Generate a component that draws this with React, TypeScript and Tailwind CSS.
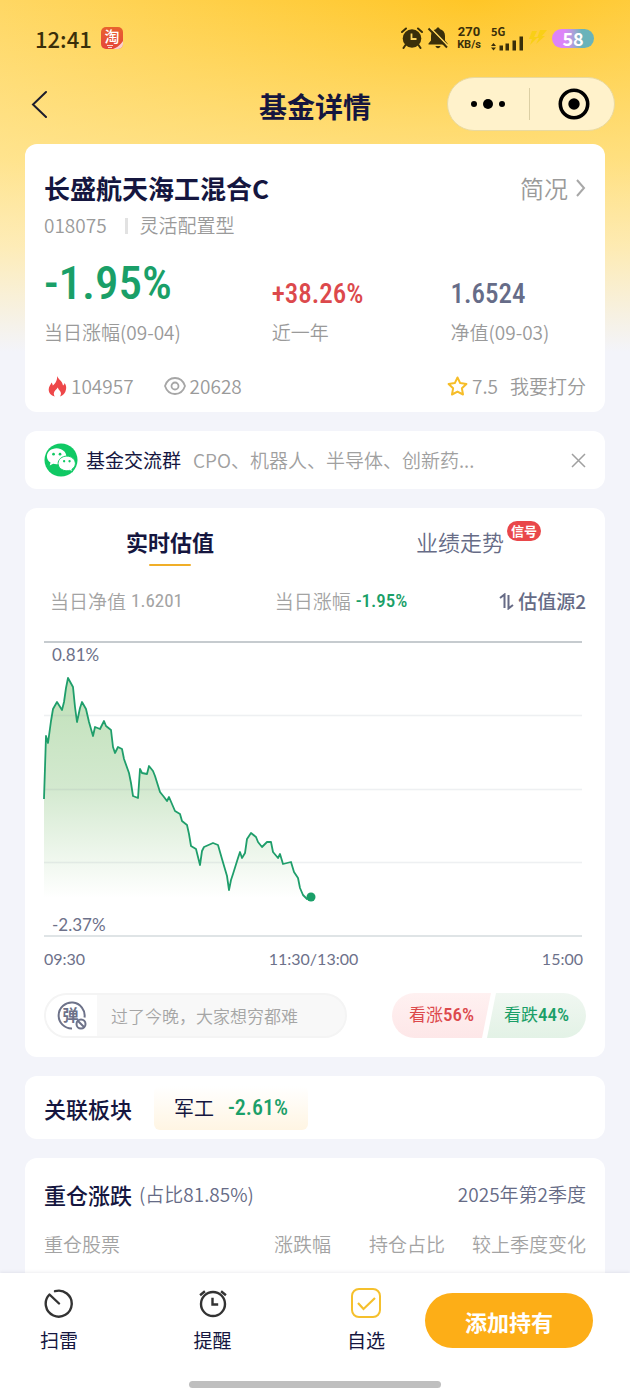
import type { ReactNode } from "react";

const points: [number, number][] = [
  [0, 158], [2, 95], [4, 102], [7, 80], [9, 68], [13, 61], [18, 69], [20, 61],
  [22, 47], [24, 37], [29, 46], [31, 66], [33, 81], [36, 67], [38, 61], [42, 68],
  [45, 81], [49, 95], [51, 86], [56, 88], [60, 80], [62, 85], [67, 89], [69, 106],
  [71, 112], [74, 106], [78, 108], [80, 118], [85, 132], [87, 142], [89, 155],
  [94, 157], [96, 128], [98, 132], [103, 133], [105, 125], [109, 130], [111, 135],
  [116, 151], [120, 156], [123, 160], [125, 156], [131, 170], [136, 173],
  [138, 180], [143, 184], [145, 193], [147, 205], [152, 208], [154, 216],
  [156, 224], [158, 210], [160, 206], [169, 202], [174, 204], [178, 218],
  [183, 235], [185, 249], [187, 239], [189, 233], [194, 217], [196, 211],
  [198, 217], [201, 212], [203, 198], [207, 192], [212, 196], [214, 201],
  [218, 206], [223, 201], [227, 201], [229, 211], [234, 217], [236, 213],
  [239, 223], [247, 221], [250, 231], [254, 237], [256, 247], [259, 254],
  [263, 258], [267, 256],
];

const line = points.map(([x, y]) => `${x},${y}`).join(" ");

const Num = ({ className = "", children }: { className?: string; children: ReactNode }) => (
  <span className={`font-['Roboto_Condensed',Roboto,sans-serif] ${className}`}>
    {children}
  </span>
);

const Card = ({ className = "", children }: { className?: string; children: ReactNode }) => (
  <section className={`rounded-xl bg-white ${className}`}>{children}</section>
);

const StatusBar = () => (
  <div className="flex h-[76px] items-center justify-between pr-9 pl-[35px] text-[#3a2f0a]">
    <div className="flex items-center gap-[9px]">
      <span className="text-[22px] leading-8 font-medium">12:41</span>
      <svg className="overflow-visible" width="22" height="22" viewBox="0 0 22 22">
        <defs>
          <linearGradient id="tao" x1="0" y1="0" x2="0" y2="1">
            <stop offset="0" stopColor="#e8622e" />
            <stop offset="1" stopColor="#e5453a" />
          </linearGradient>
        </defs>
        <rect width="22" height="22" rx="5" fill="url(#tao)" />
        <path d="M22 14v3a5 5 0 0 1-5 5h-5c5-2 7-4 10-8z" fill="#fff" opacity=".75" />
        <path d="M6 18.500h6M7 20.500h4" stroke="#f9d9cf" strokeWidth="1" />
        <text x="11" y="15" textAnchor="middle" fontSize="15" fontWeight="500" fill="#fff">淘</text>
      </svg>
    </div>
    <div className="flex items-center">
      <svg width="22" height="22" viewBox="0 0 22 22" fill="currentColor">
        <circle cx="11" cy="11.500" r="9.300" />
        <path d="M1 5 5 1.500M21 5 17 1.500M4.500 18 2.500 21M17.500 18l2 3" stroke="currentColor" strokeWidth="2" strokeLinecap="round" />
        <path d="M10.500 6.500v5.500h5" fill="none" stroke="#ffd65c" strokeWidth="1.800" />
      </svg>
      <svg className="ml-1" width="22" height="22" viewBox="0 0 22 22" fill="currentColor">
        <path d="M11 .5c1 0 1.700.7 1.700 1.600 3.500.8 5.300 3.400 5.300 6.900v4.500l2.500 3v1h-19v-1l2.500-3V9c0-3.500 1.800-6.100 5.300-6.900C9.300 1.200 10 .5 11 .5zM8.500 19h5c-.3 1.400-1.200 2.200-2.500 2.200S8.800 20.400 8.500 19z" />
        <path d="M3 .5 21.500 19.500" stroke="#ffd65c" strokeWidth="1.600" />
        <path d="M1.500 1.500 20 20.500" stroke="currentColor" strokeWidth="2" />
      </svg>
      <div className="ml-[6px] flex w-7 flex-col items-center font-['Roboto',sans-serif] leading-[13px] font-bold">
        <span className="text-[13px]">270</span>
        <span className="text-[11px]">KB/s</span>
      </div>
      <div className="ml-2 flex flex-col">
        <span className="text-[11px] leading-[10px] font-bold">5G</span>
        <svg width="33" height="15" viewBox="0 0 33 15" fill="currentColor">
          <path d="M0 10 2.500 7 5 10zM0 11.500h5L2.500 14.500zM8.500 9.500H12v5H8.500zM14.500 7.500H18v7h-3.500zM21.500 4.500H25v10h-3.500zM28.500.5H32v14h-3.500z" />
        </svg>
      </div>
      <svg className="ml-1 text-[#f9cf16]" width="20" height="18" viewBox="0 0 20 18" fill="currentColor">
        <path d="M4 2h5L6 8h4L2 16l2-6H1zM12 1h7l-5 6h3L8 15l3-6H9z" />
      </svg>
      <div className="ml-1 flex h-[19px] w-[42px] items-center justify-center rounded-full bg-linear-to-r from-[#dd84f8] from-30% to-[#69b3ba] to-70% text-[18px] leading-none font-bold text-white">
        58
      </div>
    </div>
  </div>
);

const NavBar = () => (
  <header className="grid h-14 grid-cols-[1fr_auto_1fr] items-center px-[15px]">
    <button aria-label="返回" className="ml-[14px] justify-self-start">
      <svg width="22" height="28" viewBox="0 0 22 28" fill="none" stroke="#1c1c2c" strokeWidth="2" strokeLinecap="round">
        <path d="M17 2 4 14.500 17 27" />
      </svg>
    </button>
    <h1 className="pt-1 text-[28px] leading-10 font-bold">基金详情</h1>
    <div className="flex h-[54px] w-[168px] items-center justify-self-end rounded-full border border-[#e9d9a0] bg-[#fff2cb]">
      <button aria-label="更多" className="flex h-full flex-1 items-center justify-center gap-[6px]">
        <span className="size-[6px] rounded-full bg-black" />
        <span className="size-[10px] rounded-full bg-black" />
        <span className="size-[6px] rounded-full bg-black" />
      </button>
      <span className="h-8 w-px bg-[#dccfa4]" />
      <button aria-label="关闭" className="flex h-full flex-1 items-center justify-center pl-1">
        <svg width="32" height="32" viewBox="0 0 32 32">
          <circle cx="16" cy="16" r="13.700" fill="none" stroke="#000" strokeWidth="3.600" />
          <circle cx="16" cy="16" r="5.700" />
        </svg>
      </button>
    </div>
  </header>
);

const Summary = () => (
  <Card className="px-[19px] pt-[25px] pb-[10px] text-[19px] font-[350] text-[#9a9a9a]">
    <div className="flex items-center justify-between">
      <h2 className="text-[26px] leading-[38px] font-bold text-[#15163f]">长盛航天海工混合C</h2>
      <a href="#profile" className="flex items-center gap-2 text-[24px] leading-[38px]">
        简况
        <svg width="10" height="18" viewBox="0 0 10 18" fill="none" stroke="#a8a8a8" strokeWidth="2">
          <path d="m1 1 7 8-7 8" />
        </svg>
      </a>
    </div>
    <div className="flex h-[37px] items-center">
      018075
      <span className="mr-3 ml-[18px] h-4 w-[3px] bg-[#e2e2e2]" />
      灵活配置型
    </div>
    <div className="grid grid-cols-[42fr_33fr_25fr]">
      <div>
        <div className="flex h-[72px] items-end pb-[9px]">
          <Num className="text-[47px] leading-[48px] font-medium text-[#1a9f68]">-1.95%</Num>
        </div>
        <div className="leading-8">当日涨幅(09-04)</div>
      </div>
      <div>
        <div className="flex h-[72px] items-end pb-[7px]">
          <Num className="text-[27px] leading-[30px] font-medium text-[#dc494c]">+38.26%</Num>
        </div>
        <div className="leading-8">近一年</div>
      </div>
      <div>
        <div className="flex h-[72px] items-end pb-[7px]">
          <Num className="text-[27px] leading-[30px] font-medium text-[#666c88]">1.6524</Num>
        </div>
        <div className="leading-8">净值(09-03)</div>
      </div>
    </div>
    <div className="flex items-center pt-[22px] leading-8">
      <svg className="mr-1 ml-1" width="19" height="21" viewBox="0 0 19 21">
        <path d="M9 0c1 3 5.500 5 6 9.500 1-.5 1.300-1.500 1.500-2.500C18 9 18.500 11 18 13.500 17.500 17 15 19.700 12 20.500c1.300-1.800 1.300-3.800 0-5.500-.8-1-1.800-2-2.200-3.500-1.300 2-3.800 3.500-4 6 0 1.200.4 2.200 1 3C3 19.700.7 17 .7 13.500c0-3 2-4.500 2.800-7 .8 1 1.200 2 1.300 3C7.500 7.500 9.500 4 9 0z" fill="#ee4749" />
      </svg>
      104957
      <svg className="mr-1 ml-[30px]" width="22" height="18" viewBox="0 0 22 18" fill="none" stroke="#a6a6a6" strokeWidth="1.800">
        <path d="M1 9c1.500-4.500 5-8 10-8s8.500 3.500 10 8c-1.500 4.500-5 8-10 8S2.500 13.500 1 9z" />
        <circle cx="11" cy="9" r="3.500" />
      </svg>
      20628
      <svg className="mr-1 ml-auto" width="21" height="20" viewBox="0 0 21 20" fill="none" stroke="#f6bd28" strokeWidth="2" strokeLinejoin="round">
        <path d="m10.500 1.500 2.700 5.600 6.200.9-4.500 4.300 1.100 6.200-5.500-2.900L5 18.500l1.100-6.200L1.600 8l6.200-.9z" />
      </svg>
      7.5
      <button className="ml-3">我要打分</button>
    </div>
  </Card>
);

const GroupBanner = () => (
  <Card className="flex h-[58px] items-center px-[19px] text-[19px] leading-8">
    <svg className="mr-2" width="34" height="34" viewBox="0 0 35 35">
      <circle cx="17.500" cy="17.500" r="17" fill="#10c964" />
      <path d="M13 5.500c-5.500 0-10 3.700-10 8.300 0 2.600 1.500 4.900 3.700 6.400l-.8 3 3.500-1.800c1.100.3 2.300.5 3.600.5 5.500 0 10-3.600 10-8.100s-4.500-8.300-10-8.300z" fill="#fff" />
      <path d="M23.500 13.500c-5 0-9 3.400-9 7.600s4 7.500 9 7.500c1 0 2-.2 2.900-.4l3 1.500-.7-2.600c2.200-1.400 3.600-3.600 3.600-6 0-4.200-4-7.600-8.800-7.600z" fill="#fff" stroke="#10c964" />
      <g fill="#10c964">
        <circle cx="9.800" cy="11.500" r="1.400" />
        <circle cx="16.500" cy="11.500" r="1.400" />
        <circle cx="20.700" cy="18.800" r="1.200" />
        <circle cx="26.300" cy="18.800" r="1.200" />
      </g>
    </svg>
    <span>基金交流群</span>
    <span className="ml-3 flex-1 truncate font-[350] text-[#a0a0a0]">CPO、机器人、半导体、创新药...</span>
    <button aria-label="关闭提示">
      <svg width="15" height="15" viewBox="0 0 15 15" stroke="#a0a0a0" strokeWidth="1.500">
        <path d="m1 1 13 13M14 1 1 14" />
      </svg>
    </button>
  </Card>
);

const Chart = () => (
  <div className="relative mt-[25px] mr-1 font-['Lato',sans-serif] text-[17px] leading-5 text-[#6d718a]">
    <svg className="block w-full overflow-visible" height="296" viewBox="0 0 538 296" preserveAspectRatio="none">
      <defs>
        <linearGradient id="area" gradientUnits="userSpaceOnUse" x1="0" y1="37" x2="0" y2="257">
          <stop offset="0" stopColor="#bfe0b8" />
          <stop offset=".5" stopColor="#d3e9cf" />
          <stop offset="1" stopColor="#fff" />
        </linearGradient>
      </defs>
      <polygon points={`${line} 267,257 0,257`} fill="url(#area)" />
      <path d="M0 74.500h538M0 148.500h538M0 221.500h538" stroke="#8a94a0" strokeOpacity=".14" strokeWidth="1.500" />
      <path d="M0 1h538" stroke="#c6cbcf" strokeWidth="2" />
      <path d="M0 295h538" stroke="#dfe4e6" strokeWidth="2" />
      <polyline points={line} fill="none" stroke="#1f9e6b" strokeWidth="1.800" strokeLinejoin="round" />
      <circle cx="267" cy="256" r="4.500" fill="#1a9f68" />
    </svg>
    <span className="absolute top-1 left-2">0.81%</span>
    <span className="absolute bottom-[2px] left-2">-2.37%</span>
  </div>
);

const Estimate = () => (
  <Card className="pt-[15px] pb-[19px]">
    <div role="tablist" className="grid grid-cols-2 text-[22px] leading-9">
      <button role="tab" aria-selected="true" className="flex flex-col items-center gap-[5px] font-bold">
        实时估值
        <span className="h-[2px] w-[42px] rounded-full bg-[#f0ae28]" />
      </button>
      <button role="tab" aria-selected="false" className="justify-self-center self-start font-[350] text-[#666b86]">
        <span className="relative">
          业绩走势
          <span className="absolute -top-1 left-full ml-[3px] rounded-full bg-[#e9474a] px-1 text-[13px] leading-5 font-bold whitespace-nowrap text-white">
            信号
          </span>
        </span>
      </button>
    </div>
    <div className="px-[19px]">
      <div className="mt-5 flex h-[30px] items-center justify-between pl-[6px] text-[19px] font-[350] text-[#a3a3a3]">
        <span className="flex items-center gap-[5px]">
          当日净值 <Num className="font-normal">1.6201</Num>
        </span>
        <span className="flex items-center gap-[5px]">
          当日涨幅 <Num className="font-medium text-[#1a9f68]">-1.95%</Num>
        </span>
        <button className="flex items-center gap-1 font-medium text-[#666b86]">
          <svg width="15" height="17" viewBox="0 0 15 17" fill="none" stroke="currentColor" strokeWidth="2">
            <path d="M1 5 5.500 1.500V15M9.500 2v13.500L14 12" />
          </svg>
          估值源2
        </button>
      </div>
      <Chart />
      <div className="mt-2 flex justify-between pr-[3px] font-['Lato',sans-serif] text-[16px] leading-7 text-[#6d718a]">
        <span>09:30</span>
        <span>11:30/13:00</span>
        <span>15:00</span>
      </div>
      <div className="mt-5 flex h-[45px] items-stretch text-[17px]">
        <div className="flex min-w-0 flex-1 overflow-hidden rounded-full border-2 border-[#f4f4f4] bg-[#f8f8f8]">
          <button aria-label="弹幕" className="flex w-[51px] items-center justify-center bg-white">
            <svg className="shrink-0" width="32" height="30" viewBox="0 0 32 30" fill="none" stroke="#6d7289" strokeWidth="2">
              <path d="M16 27.500a13 13 0 1 1 12.500-11" />
              <text x="14.500" y="20" textAnchor="middle" fontSize="16" fontWeight="700" fill="#6d7289" stroke="none">弹</text>
              <circle cx="25" cy="23" r="4.500" fill="#fff" />
              <path d="m22 20 6 6" />
            </svg>
          </button>
          <input
            aria-label="发表看法"
            placeholder="过了今晚，大家想穷都难"
            className="min-w-0 flex-1 bg-transparent pl-[14px] font-[350] outline-none placeholder:text-[#a5a5a5]"
          />
        </div>
        <div className="ml-[45px] flex">
          <button className="w-[99px] rounded-l-full bg-linear-to-b from-[#fff1f1] to-[#fde7e8] text-[#dc494c] [clip-path:polygon(0_0,100%_0,calc(100%-9px)_100%,0_100%)]">
            看涨<Num className="text-[19px] font-medium">56%</Num>
          </button>
          <button className="-ml-1 w-[99px] rounded-r-full bg-linear-to-b from-[#f0f7f1] to-[#e3f2e6] text-[#1a9f68] [clip-path:polygon(9px_0,100%_0,100%_100%,0_100%)]">
            看跌<Num className="text-[19px] font-medium">44%</Num>
          </button>
        </div>
      </div>
    </div>
  </Card>
);

const Sector = () => (
  <Card className="flex h-[63px] items-center gap-[22px] px-[19px]">
    <h2 className="text-[22px] leading-9 font-medium">关联板块</h2>
    <a href="#sector" className="flex h-11 items-center gap-[14px] rounded-md bg-linear-to-b from-white to-[#fff5e3] px-5 text-[20px]">
      军工
      <Num className="text-[22px] font-medium text-[#1a9f68]">-2.61%</Num>
    </a>
  </Card>
);

const Holdings = () => (
  <Card className="flex-1 rounded-b-none px-[19px] pt-[18px] text-[19px] font-[350]">
    <div className="flex items-center justify-between leading-9 text-[#666b86]">
      <div className="flex items-center gap-[7px]">
        <h2 className="text-[22px] font-medium text-[#15163f]">重仓涨跌</h2>
        <span>(占比81.85%)</span>
      </div>
      <span>2025年第2季度</span>
    </div>
    <table className="mt-4 w-full leading-8 text-[#a3a3a3]">
      <thead>
        <tr className="text-right [&>th]:font-[350]">
          <th className="text-left">重仓股票</th>
          <th>涨跌幅</th>
          <th className="w-[114px]">持仓占比</th>
          <th className="w-[141px]">较上季度变化</th>
        </tr>
      </thead>
    </table>
  </Card>
);

const BottomBar = () => (
  <footer className="relative bg-white pt-[14px] pb-3 shadow-[0_-1px_3px_rgba(40,40,80,0.08)]">
    <div className="flex items-start pr-[37px] pl-10 text-[19px] leading-8">
      <nav className="mr-10 flex flex-1 justify-between">
        <button className="flex flex-col items-center gap-[5px]">
          <svg width="32" height="32" viewBox="0 0 32 32" fill="none" stroke="#333" strokeWidth="2.400" strokeLinecap="round">
            <path d="M12 4.200A13 13 0 1 1 6.500 7.500L16 16.500" strokeLinejoin="round" />
          </svg>
          扫雷
        </button>
        <button className="flex flex-col items-center gap-[5px]">
          <svg width="32" height="32" viewBox="0 0 32 32" fill="none" stroke="#333" strokeWidth="2.400">
            <circle cx="17" cy="17" r="12" />
            <path d="M16.500 12V17.500H21M5 7.500 8 5M29 7.500 26 5" strokeLinecap="square" />
          </svg>
          提醒
        </button>
        <button className="flex flex-col items-center gap-[5px]">
          <svg width="32" height="32" viewBox="0 0 32 32" fill="none" stroke="#f5c02d" strokeWidth="2">
            <rect x="2" y="2" width="28" height="28" rx="7" />
            <path d="m8 16 5.500 6L25 11" strokeWidth="2.200" />
          </svg>
          自选
        </button>
      </nav>
      <button className="mt-[6px] h-[55px] w-[168px] rounded-full bg-[#fdae17] text-[22px] font-bold text-white">
        添加持有
      </button>
    </div>
    <div className="mx-auto mt-[25px] h-[7px] w-2/5 rounded-full bg-[#bfbfbf]" />
  </footer>
);

export default function App() {
  return (
    <div className="flex h-screen flex-col overflow-hidden bg-[#f3f4fa] bg-[linear-gradient(180deg,rgba(255,240,190,0)_0%,rgba(255,236,170,0.55)_45%,rgba(253,240,200,0.8)_70%,#f3f4fa_100%),radial-gradient(110%_130%_at_75%_0%,#ffc627_0%,#ffd04a_40%,#ffdf80_100%)] bg-[length:100%_352px] bg-no-repeat font-['Noto_Sans_CJK_SC',sans-serif] text-[#15163f]">
      <StatusBar />
      <NavBar />
      <main className="flex min-h-0 flex-1 flex-col gap-[19px] overflow-hidden px-[25px] pt-3">
        <Summary />
        <GroupBanner />
        <Estimate />
        <Sector />
        <Holdings />
      </main>
      <BottomBar />
    </div>
  );
}
